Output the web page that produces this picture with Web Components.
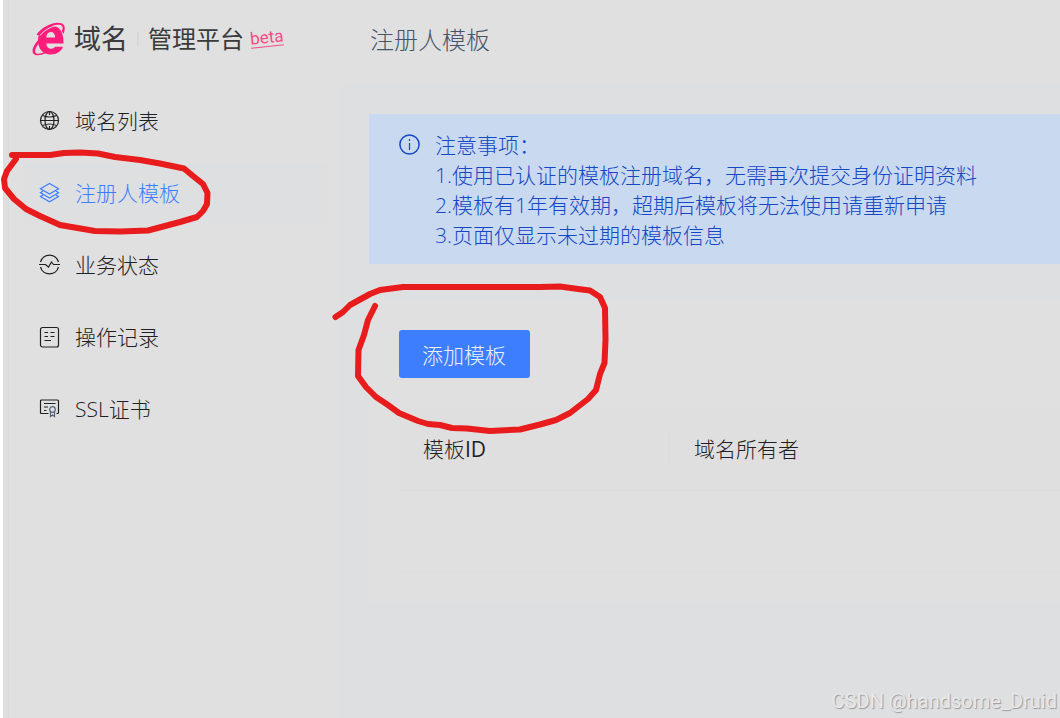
<!DOCTYPE html>
<html lang="zh-CN">
<head>
<meta charset="utf-8">
<title>域名管理平台</title>
<style>
    :root {
        --panel-bg: #e0e0e0;
        --page-bg: #dedfe1;
        --line: #dadbdc;
        --text-color: #1f2023;
        --primary: #3d7eff;
    }

    * { box-sizing: border-box; }

    body {
        margin: 0;
        background: #fff;
        color: var(--text-color);
        font: 300 21px/30px "Open Sans", "Noto Sans CJK SC", sans-serif;
    }
</style>
</head>
<body>
<app-shell>
    <brand-logo slot="side"></brand-logo>
    <side-nav slot="side">
        <nav-entry icon="globe">域名列表</nav-entry>
        <nav-entry icon="layers" active>注册人模板</nav-entry>
        <nav-entry icon="pulse">业务状态</nav-entry>
        <nav-entry icon="record">操作记录</nav-entry>
        <nav-entry icon="cert">SSL证书</nav-entry>
    </side-nav>
    <page-title slot="top">注册人模板</page-title>
    <notice-box>
        <div>注意事项：</div>
        <div>1.使用已认证的模板注册域名，无需再次提交身份证明资料</div>
        <div>2.模板有1年有效期，超期后模板将无法使用请重新申请</div>
        <div>3.页面仅显示未过期的模板信息</div>
    </notice-box>
    <template-card>添加模板</template-card>
</app-shell>
<pen-marks></pen-marks>
<water-mark>CSDN @handsome_Druid</water-mark>

<script>
// small helper so every element gets its shadow root the same way
class BaseElement extends HTMLElement {
    connectedCallback() {
        if (this.shadowRoot) return;
        this.attachShadow({mode: 'open'});
        this.shadowRoot.innerHTML = `<style>* { box-sizing: border-box; }</style>` + this.render();
    }
}

class AppShell extends BaseElement {
    render() {
        return `
            <style>
                :host {
                    display: grid;
                    grid-template-columns: 337px minmax(0, 1fr);
                    min-height: 100vh;
                    margin-left: 3px;
                    background: var(--page-bg);
                    overflow: hidden;
                }

                .side {
                    margin-left: 5px;
                    border-left: 1px solid var(--line);
                    background: var(--panel-bg);
                    box-shadow: -5px 0 0 #dfdfdf;
                }

                header {
                    display: flex;
                    align-items: center;
                    height: 84px;
                    padding: 0 30px 4px;
                    background: var(--panel-bg);
                }

                main {
                    display: flex;
                    flex-direction: column;
                    gap: 35px;
                    padding: 30px 0 0 29px;
                }
            </style>
            <div class="side"><slot name="side"></slot></div>
            <div>
                <header><slot name="top"></slot></header>
                <main><slot></slot></main>
            </div>`;
    }
}

class BrandLogo extends BaseElement {
    render() {
        return `
            <style>
                :host {
                    display: flex;
                    align-items: center;
                    height: 78px;
                    padding-left: 23px;
                    color: #3a3a3c;
                    font-weight: 400;
                    white-space: nowrap;
                }

                .name { margin-left: 8px; font-size: 27px; }
                .bar { width: 2px; height: 15px; margin: 0 9px; background: #d5d8df; }
                .sub { font-size: 24px; }

                .beta {
                    margin: 0 0 4px 6px;
                    border-bottom: 1px solid #fb4a86;
                    color: #fb4a86;
                    font: 400 17px/18px Roboto, sans-serif;
                    transform: rotate(-6deg);
                }
            </style>
            <svg width="34" height="34" viewBox="0 0 34 34" aria-hidden="true">
                <path fill="#ff1d7c" fill-rule="evenodd" d="M31.500 21.500H14.200C14.500 25 16.600 26.800 19.200 26.800C21 26.800 22.300 26 23 24.800H31C29.200 29.500 24.800 32.500 18.800 32.500C11 32.500 6 27 6 18.500C6 10 11 3.500 19 3.500C27 3.500 31.900 9.500 31.500 21.500ZM14.300 15.500H23.200C23 12 21.600 10 18.800 10C16 10 14.500 12.200 14.300 15.500Z"/>
                <path fill="#ff1d7c" d="M4.500 12.500C9.500 5 23-2 30.200 1.600C33.500 3.500 33.200 7.600 31.500 12L29.700 9.200C31 5.800 31.200 4.200 28.400 3C23 1.400 12 6 6.500 13.500Z"/>
                <path fill="#ff1d7c" d="M7 17C1 23.500-1 29.500 1.700 32C4.700 34.500 10.500 32.800 15 30.500L13 29.700C8.500 31.800 4.600 32.400 3.400 30.400C2.200 28 4.800 23.500 8 20Z"/>
                <path fill="none" stroke="#e0e0e0" d="M8 13.500C12 8.500 18 5 24 3.800"/>
            </svg>
            <span class="name">域名</span>
            <span class="bar"></span>
            <span class="sub">管理平台</span>
            <span class="beta">beta</span>`;
    }
}

class SideNav extends BaseElement {
    render() {
        return `
            <style>
                :host { display: block; padding: 13px 13px 0 14px; }
                nav { display: flex; flex-direction: column; gap: 12px; }
            </style>
            <nav><slot></slot></nav>`;
    }
}

const ICONS = {
    globe: `<circle cx="10.5" cy="9.5" r="9"/><ellipse cx="10.5" cy="9.5" rx="4.5" ry="9"/>
            <path d="M10.5 .5v3.500M10.5 15v3.500M1.5 9.500h18M3.500 4.500q7 3 14 0M3.500 14.500q7-3 14 0"/>`,
    layers: `<path d="M10.5 .5L19.5 5.700L10.5 11L1.5 5.700Z"/>
            <path d="M4 8L1.5 9.700L10.5 15L19.5 9.700L17 8M4 12L1.5 13.500L10.5 18.700L19.5 13.500L17 12"/>`,
    pulse: `<path d="M1.5 7A9.300 9.300 0 0 1 19.5 7M1.5 12A9.300 9.300 0 0 0 19.5 12M0 9.500H6.500L9.500 12L12.500 7L14.500 9.500H21"/>`,
    record: `<rect x="1.500" y=".5" width="18" height="19.500" rx="2"/>
            <path d="M5.500 5.500h3.500M11.500 5.500h4M5.500 9.500h3.500M11.500 9.500h4M5.500 13.500h6.500"/>`,
    cert: `<path d="M9.500 14.500H2.500Q1.500 14.500 1.500 13.500V2Q1.500 1 2.500 1H18.500Q19.500 1 19.500 2V13.500Q19.500 14.500 18.500 14.500H17.500M5 4.500h11.500M5 8h4M5 11.500h2.500"/>
            <g stroke="#52617c"><circle cx="13.500" cy="10.500" r="2.800"/><path d="M11.500 13V17.500L13.500 16L15.500 17.500V13"/></g>`
};

class NavEntry extends BaseElement {
    render() {
        let icon = ICONS[this.getAttribute('icon')] ?? '';

        return `
            <style>
                :host { display: block; }
                :host([active]) { background: var(--page-bg); }
                :host([active]) a { color: var(--primary); }

                a {
                    display: flex;
                    align-items: center;
                    gap: 15px;
                    height: 60px;
                    padding-left: 16px;
                    color: inherit;
                    text-decoration: none;
                }

                svg { fill: none; stroke: currentColor; stroke-width: 1.2; overflow: visible; }
            </style>
            <a href="#"><svg width="21" height="21" viewBox="0 0 21 21" aria-hidden="true">${icon}</svg><slot></slot></a>`;
    }
}

class PageTitle extends BaseElement {
    render() {
        return `
            <style>
                h1 { margin: 0; color: #465467; font-size: 24px; font-weight: 300; }
            </style>
            <h1><slot></slot></h1>`;
    }
}

class NoticeBox extends BaseElement {
    render() {
        return `
            <style>
                :host {
                    display: flex;
                    gap: 15px;
                    padding: 16px 30px 14px;
                    background: #c9d9f0;
                    color: #1447c4;
                }

                svg { flex: none; margin-top: 4px; }
            </style>
            <svg width="21" height="21" viewBox="0 0 21 21" fill="none" stroke="currentColor" stroke-width="1.5" aria-hidden="true">
                <circle cx="10.5" cy="10.5" r="9.600"/><path stroke-width="1.2" d="M10.5 9v7M10.5 5v2"/>
            </svg>
            <div><slot></slot></div>`;
    }
}

class TemplateCard extends BaseElement {
    render() {
        return `
            <style>
                :host {
                    display: block;
                    padding: 31px 0 30px 30px;
                    background: var(--panel-bg);
                }

                button {
                    display: block;
                    height: 48px;
                    padding: 2px 24px 0 23px;
                    border: none;
                    border-radius: 3px;
                    background: var(--primary);
                    color: #f0f1f4;
                    font: inherit;
                    cursor: pointer;
                }

                table {
                    width: 100%;
                    margin-top: 29px;
                    border-collapse: collapse;
                    table-layout: fixed;
                }

                th {
                    height: 83px;
                    padding: 2px 0 0;
                    border-bottom: 1px solid #dcdcdc;
                    background: #dfdfdf;
                    font-weight: 300;
                    text-align: left;
                }

                th:first-child { width: 271px; }
                th span { display: block; padding-left: 24px; line-height: 32px; }
                th:first-child span { border-right: 1px solid var(--line); }
                b { font-weight: 500; }
                td { height: 81px; border-bottom: 1px solid #dedede; }
            </style>
            <button type="button"><slot></slot></button>
            <table>
                <thead><tr><th><span>模板<b>ID</b></span></th><th><span>域名所有者</span></th></tr></thead>
                <tbody><tr><td></td><td></td></tr></tbody>
            </table>`;
    }
}

// hand drawn circles lying over the page
class PenMarks extends BaseElement {
    render() {
        return `
            <style>
                :host { position: absolute; top: 0; left: 0; pointer-events: none; }
                svg { display: block; }
            </style>
            <svg width="620" height="440" fill="none" stroke="#e81c1c" stroke-width="6" stroke-linecap="round" stroke-linejoin="round" aria-hidden="true">
                <path d="M12 155H50L64 153L80 152.500L98 153.500L115 157L140 160L160 163.500L184 168.500L193 176L203 184L207.500 193L207 204L203 211L197 217L180 222L165 226L148 230.500L120 231.500L95 231L60 225L40 216L26 209L14 199L5 188L4 179L7 171L13 163L16 159"/>
                <path d="M375 306L368 320L364 335L358.500 350L358 376L366 387L376 397L388 405L399 413L418 421L428 424L440 425L452 428L467 428.500L490 431L520 429.500L540 424.500L556 420L570 413L588 399L596 390L600 374L604.500 363L605.500 340L605 308L600 297L590 290.500L578 289L560 286.500L540 287H403L380 290L370 294L350 305L343 312L335.500 317"/>
            </svg>`;
    }
}

class WaterMark extends BaseElement {
    render() {
        return `
            <style>
                :host {
                    position: absolute;
                    right: 3px;
                    bottom: 3px;
                    color: #e8e8ea;
                    font: 400 20px/28px Roboto, sans-serif;
                    text-shadow: 1px 1px 1px #98999b;
                }
            </style>
            <slot></slot>`;
    }
}

customElements.define('app-shell', AppShell);
customElements.define('brand-logo', BrandLogo);
customElements.define('side-nav', SideNav);
customElements.define('nav-entry', NavEntry);
customElements.define('page-title', PageTitle);
customElements.define('notice-box', NoticeBox);
customElements.define('template-card', TemplateCard);
customElements.define('pen-marks', PenMarks);
customElements.define('water-mark', WaterMark);
</script>
</body>
</html>
